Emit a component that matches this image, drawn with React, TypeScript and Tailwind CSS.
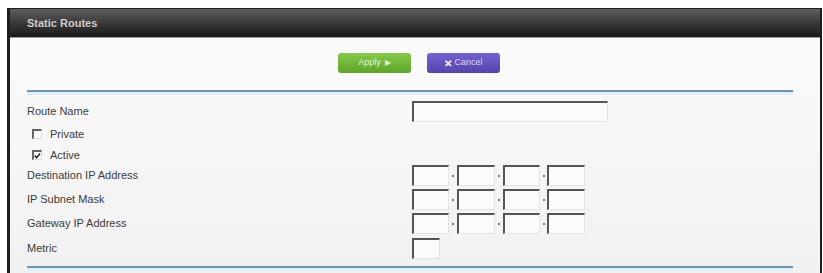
import React from "react";

const font = { fontFamily: '"Liberation Sans", Arial, sans-serif' };

const Box = ({ w }: { w: string }) => (
  <div
    className={`${w} h-[21px] bg-[#fbfbfb] border-t-2 border-l-2 border-b border-r border-t-[#555] border-l-[#555] border-b-[#e4e4e4] border-r-[#e4e4e4]`}
  />
);

const Dot = ({ w }: { w: string }) => (
  <span className={`${w} flex justify-center`}>
    <span className="w-[2px] h-[2px] bg-[#777]" />
  </span>
);

const IpRow = ({ label, mt }: { label: string; mt: string }) => (
  <div className={`flex items-center h-[21px] ${mt}`}>
    <div className="w-[385px] text-[11px] text-[#3c3c3c]">{label}</div>
    <div className="flex items-center">
      <Box w="w-[37px]" />
      <Dot w="w-[8px]" />
      <Box w="w-[38px]" />
      <Dot w="w-[8px]" />
      <Box w="w-[37px]" />
      <Dot w="w-[7px]" />
      <Box w="w-[38px]" />
    </div>
  </div>
);

const Check = ({ checked }: { checked?: boolean }) => (
  <div className="w-[10px] h-[10px] bg-white border-t-2 border-l-2 border-b border-r border-t-[#666] border-l-[#666] border-b-[#ddd] border-r-[#ddd] flex items-center justify-center">
    {checked && (
      <svg width="8" height="8" viewBox="0 0 8 8">
        <path d="M1 3.5 L3 6 L7 1" stroke="#222" strokeWidth="1.8" fill="none" />
      </svg>
    )}
  </div>
);

const BlueLine = () => (
  <div className="w-[766px]">
    <div className="h-[2px] bg-[#6f97b2]" />
    <div className="h-[3px] bg-[#e2eef7]" />
  </div>
);

export default function App() {
  return (
    <div className="w-[823px] h-[273px] bg-white overflow-hidden pt-[8px] pl-[7px]" style={font}>
      <div className="w-[815px] h-[265px] border-t border-l-[3px] border-r-[2px] border-[#1e1e1e] bg-gradient-to-b from-[#fcfcfc] to-[#f1f1f1]">
        <div className="h-[29px] bg-gradient-to-b from-[#5e5e5e] via-[#3a3a3a] to-[#1a1a1a] flex items-center pl-[17px] border-b border-[#999]">
          <span className="text-[11px] font-bold text-[#cfcbcf]">Static Routes</span>
        </div>
        <div className="pl-[17px]">
          <div className="flex gap-[16px] pl-[311px] pt-[15px] h-[52px]">
            <div className="w-[73px] h-[20px] rounded-[3px] bg-gradient-to-b from-[#86c84a] to-[#5ea52a] flex items-center justify-center gap-[4px] text-[9px] text-[#dff2cc]">
              <span>Apply</span>
              <span className="text-[8px]">▶</span>
            </div>
            <div className="w-[73px] h-[20px] rounded-[3px] bg-gradient-to-b from-[#7363cf] to-[#5544ad] flex items-center justify-center gap-[2px] text-[9px] text-[#dcd6fa]">
              <span className="font-bold text-white text-[10px]">✕</span>
              <span>Cancel</span>
            </div>
          </div>
          <BlueLine />
          <div className="flex items-center h-[20px] mt-[6px]">
            <div className="w-[385px] text-[11px] text-[#3c3c3c]">Route Name</div>
            <Box w="w-[196px]" />
          </div>
          <div className="flex items-center h-[22px] mt-[2px] pl-[5px] gap-[8px]">
            <Check />
            <span className="text-[11px] text-[#3c3c3c]">Private</span>
          </div>
          <div className="flex items-center h-[20px] pl-[5px] gap-[8px]">
            <Check checked />
            <span className="text-[11px] text-[#3c3c3c]">Active</span>
          </div>
          <IpRow label="Destination IP Address" mt="mt-0" />
          <IpRow label="IP Subnet Mask" mt="mt-[3px]" />
          <IpRow label="Gateway IP Address" mt="mt-[3px]" />
          <div className="flex items-center h-[20px] mt-[4px]">
            <div className="w-[385px] text-[11px] text-[#3c3c3c]">Metric</div>
            <Box w="w-[28px]" />
          </div>
          <div className="mt-[8px]">
            <BlueLine />
          </div>
        </div>
      </div>
    </div>
  );
}
